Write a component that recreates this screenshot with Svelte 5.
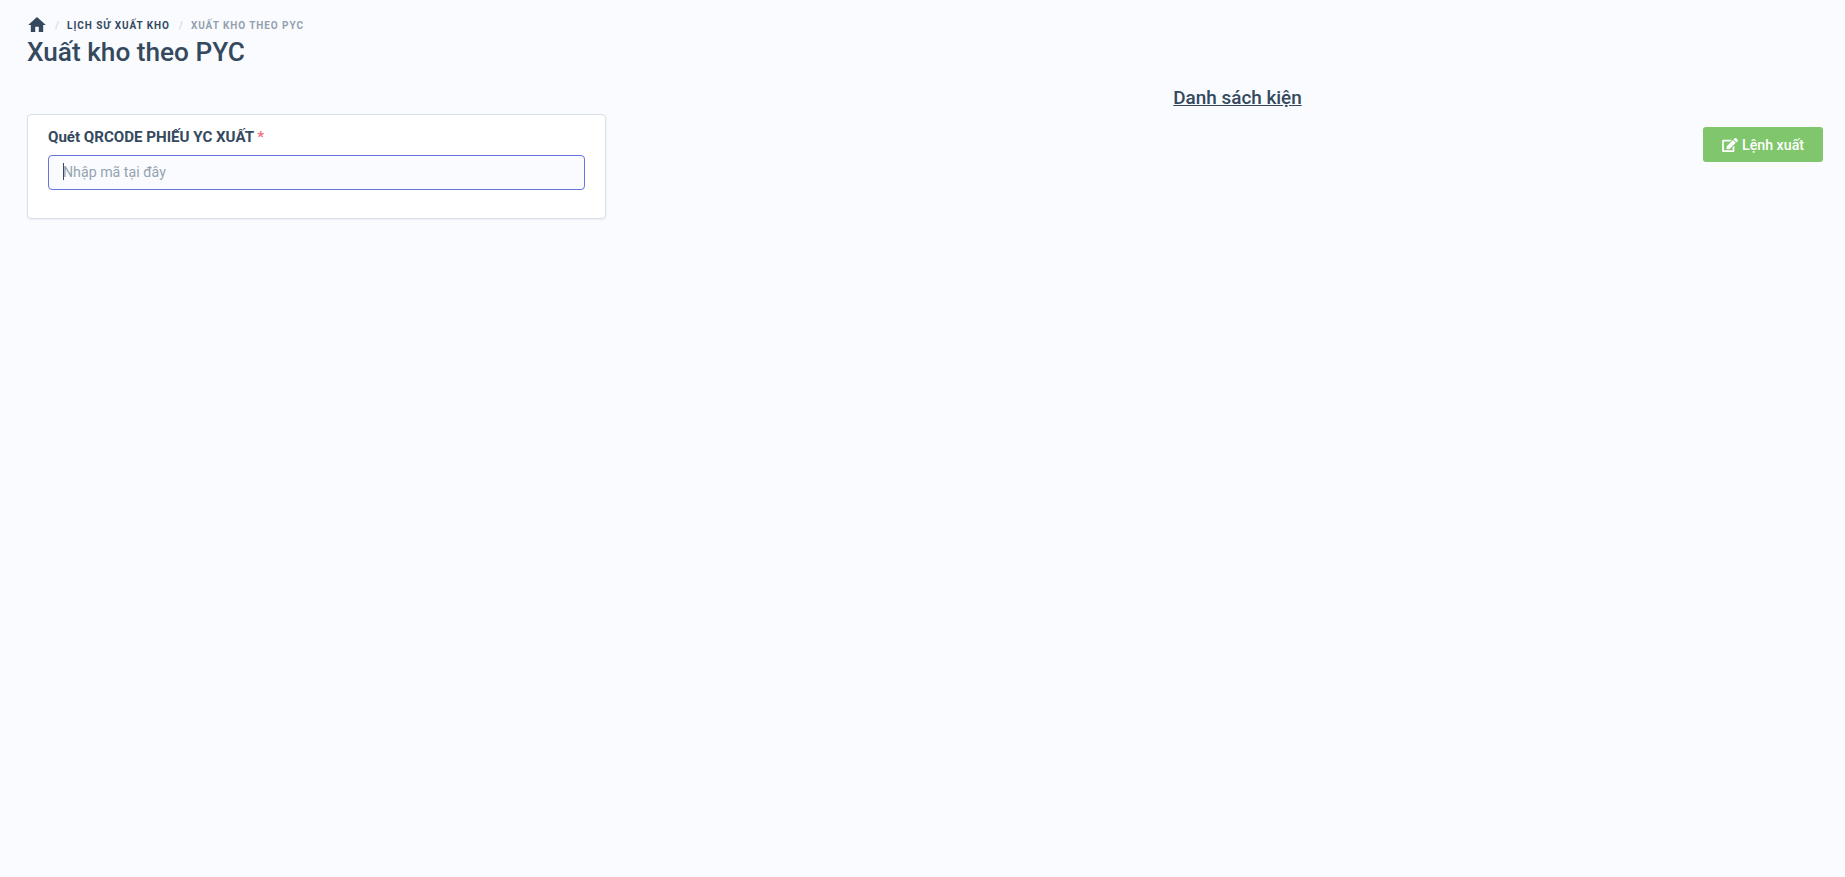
<script>
  let code = "";
</script>

<main class="page">
  <nav class="crumbs">
    <svg class="home" viewBox="2 3 20 17" width="18" height="15" aria-hidden="true">
      <path d="M10 20v-6h4v6h5v-8h3L12 3 2 12h3v8z" />
    </svg>
    <span class="sep">/</span>
    <a href="#history">Lịch sử xuất kho</a>
    <span class="sep">/</span>
    <span class="current">Xuất kho theo PYC</span>
  </nav>
  <h1>Xuất kho theo PYC</h1>

  <div class="row">
    <section class="card">
      <label for="code">Quét QRCODE PHIẾU YC XUẤT <span class="req">*</span></label>
      <div class="field">
        <input id="code" type="text" placeholder="Nhập mã tại đây" bind:value={code} />
        <span class="caret"></span>
      </div>
    </section>

    <section class="list">
      <h2>Danh sách kiện</h2>
      <div class="actions">
        <button type="button">
          <svg viewBox="0 0 576 512" width="16" height="14" aria-hidden="true">
            <path d="M402.6 83.2l90.2 90.2c3.8 3.8 3.8 10 0 13.8L274.4 405.6l-92.8 10.3c-12.4 1.4-22.9-9.1-21.5-21.5l10.3-92.8L388.8 83.2c3.8-3.8 10-3.8 13.8 0zm162-22.9l-48.8-48.8c-15.2-15.2-39.9-15.2-55.2 0l-35.4 35.4c-3.8 3.8-3.8 10 0 13.8l90.2 90.2c3.8 3.8 10 3.8 13.8 0l35.4-35.4c15.2-15.3 15.2-40 0-55.2zM384 346.2V448H64V128h229.8c3.2 0 6.2-1.3 8.5-3.5l40-40c7.6-7.6 2.2-20.5-8.5-20.5H48C21.5 64 0 85.5 0 112v352c0 26.5 21.5 48 48 48h352c26.5 0 48-21.5 48-48V306.2c0-10.7-12.9-16-20.5-8.5l-40 40c-2.2 2.3-3.5 5.3-3.5 8.5z"/>
          </svg>
          Lệnh xuất
        </button>
      </div>
    </section>
  </div>
</main>

<style>
  :global(body) {
    background: #f9fbfe;
    font-family: Roboto, "Noto Sans", sans-serif;
    color: #34495e;
  }

  .page {
    min-height: 877px;
    box-sizing: border-box;
    padding: 17px 22px 0 27px;
  }

  .crumbs {
    display: flex;
    align-items: center;
    gap: 9px;
    height: 15px;
    font-size: 10px;
    font-weight: 700;
    letter-spacing: 0.93px;
    text-transform: uppercase;
    line-height: 15px;
  }

  .crumbs a,
  .crumbs .current,
  .crumbs .sep {
    position: relative;
    top: 1px;
  }

  .home {
    fill: #34495e;
    margin-left: 1px;
  }

  .crumbs a {
    color: #34495e;
    text-decoration: none;
  }

  .sep {
    color: #ccd3dc;
    font-weight: 400;
    margin-right: -2px;
  }

  .current {
    color: #95a0ad;
  }

  h1 {
    margin: 4px 0 0;
    font-size: 26.2px;
    font-weight: 500;
    line-height: 32px;
  }

  .row {
    display: flex;
    gap: 30px;
    margin-top: 15px;
  }

  .card {
    box-sizing: border-box;
    flex: 0 0 579px;
    height: 105px;
    margin-top: 31px;
    padding: 13px 20px 0;
    background: #fff;
    border: 1px solid #d8e0e8;
    border-radius: 4px;
    box-shadow: 0 1px 2px rgba(52, 73, 94, 0.08);
  }

  label {
    display: block;
    font-size: 15.1px;
    font-weight: 700;
    line-height: 18px;
  }

  .req {
    color: #f4717f;
  }

  .field {
    position: relative;
    margin-top: 9px;
  }

  input {
    display: block;
    box-sizing: border-box;
    width: 100%;
    height: 35px;
    padding: 0 14px 2px;
    background: #f9fbfe;
    border: 1px solid #6574e0;
    border-radius: 4px;
    outline: none;
    font: 400 14.2px Roboto, sans-serif;
    color: #34495e;
  }

  input::placeholder {
    color: #95a3b0;
    opacity: 1;
  }

  .caret {
    position: absolute;
    left: 15px;
    top: 8px;
    width: 1px;
    height: 17px;
    background: #34495e;
  }

  .list {
    flex: 1;
    min-width: 0;
  }

  h2 {
    margin: 4px 0 0 16px;
    text-align: center;
    font-size: 18.9px;
    font-weight: 500;
    line-height: 22px;
    text-decoration: underline;
  }

  .actions {
    display: flex;
    justify-content: flex-end;
    margin-top: 18px;
  }

  button {
    display: flex;
    align-items: center;
    gap: 4px;
    height: 35px;
    padding: 0 19px;
    background: #7fc66c;
    border: none;
    border-radius: 3px;
    color: #fff;
    font: 500 14.2px Roboto, sans-serif;
  }

  button svg {
    fill: #fff;
  }
</style>
